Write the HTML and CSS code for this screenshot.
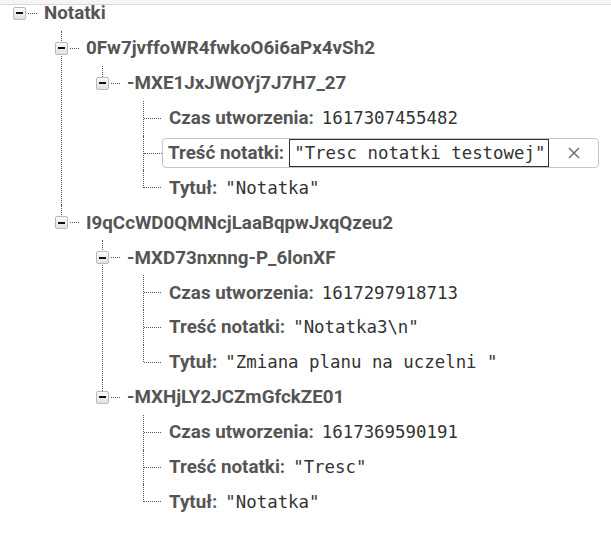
FILE: index.html
```html
<!DOCTYPE html>
<html lang="pl">
<head>
  <meta charset="UTF-8">
  <meta name="viewport" content="width=device-width, initial-scale=1.0">
  <title>Notatki - baza danych</title>
  <link rel="stylesheet" href="styles.css">
</head>
<body>

<div class="pasek"></div>

<div class="drzewo">
  <ul>
    <li class="wezel korzen">
      <div class="wiersz"><span class="przelacznik"></span><span class="kropki"></span><span class="klucz">Notatki</span></div>
      <ul>
        <!-- pierwszy uzytkownik -->
        <li class="wezel">
          <div class="wiersz"><span class="przelacznik"></span><span class="kropki"></span><span class="klucz">0Fw7jvffoWR4fwkoO6i6aPx4vSh2</span></div>
          <ul>
            <li class="wezel">
              <div class="wiersz"><span class="przelacznik"></span><span class="kropki"></span><span class="klucz">-MXE1JxJWOYj7J7H7_27</span></div>
              <ul>
                <li class="lisc">
                  <div class="wiersz"><span class="kropki"></span><span class="klucz">Czas utworzenia:</span><span class="wartosc">1617307455482</span></div>
                </li>
                <li class="lisc">
                  <div class="wiersz"><span class="kropki dluzsze"></span>
                    <div class="edycja">
                      <span class="klucz">Treść notatki:</span>
                      <input class="pole" type="text" value='"Tresc notatki testowej"'>
                      <button class="usun" aria-label="Anuluj">
                        <svg width="12" height="12" viewBox="0 0 12 12"><path d="M1 1L11 11M11 1L1 11" stroke="#666" stroke-width="1.4" fill="none"/></svg>
                      </button>
                    </div>
                  </div>
                </li>
                <li class="lisc">
                  <div class="wiersz"><span class="kropki"></span><span class="klucz">Tytuł:</span><span class="wartosc">"Notatka"</span></div>
                </li>
              </ul>
            </li>
          </ul>
        </li>
        <!-- drugi uzytkownik -->
        <li class="wezel">
          <div class="wiersz"><span class="przelacznik"></span><span class="kropki"></span><span class="klucz">I9qCcWD0QMNcjLaaBqpwJxqQzeu2</span></div>
          <ul>
            <li class="wezel">
              <div class="wiersz"><span class="przelacznik"></span><span class="kropki"></span><span class="klucz">-MXD73nxnng-P_6lonXF</span></div>
              <ul>
                <li class="lisc">
                  <div class="wiersz"><span class="kropki"></span><span class="klucz">Czas utworzenia:</span><span class="wartosc">1617297918713</span></div>
                </li>
                <li class="lisc">
                  <div class="wiersz"><span class="kropki"></span><span class="klucz">Treść notatki:</span><span class="wartosc">"Notatka3\n"</span></div>
                </li>
                <li class="lisc">
                  <div class="wiersz"><span class="kropki"></span><span class="klucz">Tytuł:</span><span class="wartosc">"Zmiana planu na uczelni "</span></div>
                </li>
              </ul>
            </li>
            <li class="wezel">
              <div class="wiersz"><span class="przelacznik"></span><span class="kropki"></span><span class="klucz">-MXHjLY2JCZmGfckZE01</span></div>
              <ul>
                <li class="lisc">
                  <div class="wiersz"><span class="kropki"></span><span class="klucz">Czas utworzenia:</span><span class="wartosc">1617369590191</span></div>
                </li>
                <li class="lisc">
                  <div class="wiersz"><span class="kropki"></span><span class="klucz">Treść notatki:</span><span class="wartosc">"Tresc"</span></div>
                </li>
                <li class="lisc">
                  <div class="wiersz"><span class="kropki"></span><span class="klucz">Tytuł:</span><span class="wartosc">"Notatka"</span></div>
                </li>
              </ul>
            </li>
          </ul>
        </li>
      </ul>
    </li>
  </ul>
</div>

</body>
</html>
```

FILE: styles.css
```css
* {
  margin: 0;
  padding: 0;
  box-sizing: border-box;
}
body {
  font-family: Roboto, "Noto Sans", Arial, sans-serif;
  background-color: #fff;
  color: #555;
}
.pasek {
  height: 5px;
  background-color: #f5f5f5;
  border-bottom: 1px solid #dadada;
}
.drzewo {
  margin-top: -9px;
  padding-left: 19px;
}
.drzewo ul {
  list-style: none;
}
.drzewo ul ul {
  margin-left: 42px;
}
.drzewo ul ul ul {
  margin-left: 41px;
}
.drzewo li {
  position: relative;
}
/* pionowa linia kropkowana */
.drzewo li::before {
  content: "";
  position: absolute;
  left: 0;
  top: 0;
  bottom: 0;
  border-left: 1px dotted #555;
}
.drzewo li:last-child::before {
  bottom: auto;
  height: 17.5px;
}
.drzewo li.korzen::before {
  display: none;
}
.wiersz {
  display: flex;
  align-items: center;
  height: 34.9px;
  white-space: nowrap;
}
.przelacznik {
  position: relative;
  z-index: 1;
  display: flex;
  align-items: center;
  justify-content: center;
  width: 13px;
  height: 13px;
  margin-left: -6px;
  border: 1px solid #b9b9b9;
  border-radius: 2px;
  background: linear-gradient(#fbfbfb, #e2e2e2);
}
.przelacznik::before {
  content: "";
  width: 7px;
  height: 2px;
  background-color: #111;
}
.kropki {
  width: 9px;
  margin: 0 7px 0 2px;
  border-top: 1px dotted #555;
}
.lisc .kropki {
  width: 17px;
  margin: 0 8px 0 1px;
}
.lisc .kropki.dluzsze {
  width: 18px;
  margin-right: 0;
}
.klucz {
  font-size: 18.8px;
  font-weight: 700;
  color: #555;
}
.wartosc {
  margin-left: 8px;
  font-family: "DejaVu Sans Mono", "Liberation Mono", monospace;
  font-size: 17.4px;
  color: #333;
}
.edycja {
  display: flex;
  align-items: stretch;
  width: 437px;
  height: 30px;
  border: 1px solid #c4c4c4;
  border-radius: 4px;
}
.edycja .klucz {
  display: flex;
  align-items: center;
  padding: 0 5px;
}
.pole {
  width: 260px;
  padding: 0 4px;
  border: 1px solid #333;
  font-family: "DejaVu Sans Mono", "Liberation Mono", monospace;
  font-size: 17.4px;
  color: #333;
  outline: none;
}
.usun {
  flex: 1;
  display: flex;
  align-items: center;
  justify-content: center;
  border: none;
  background: none;
  cursor: pointer;
}
```
